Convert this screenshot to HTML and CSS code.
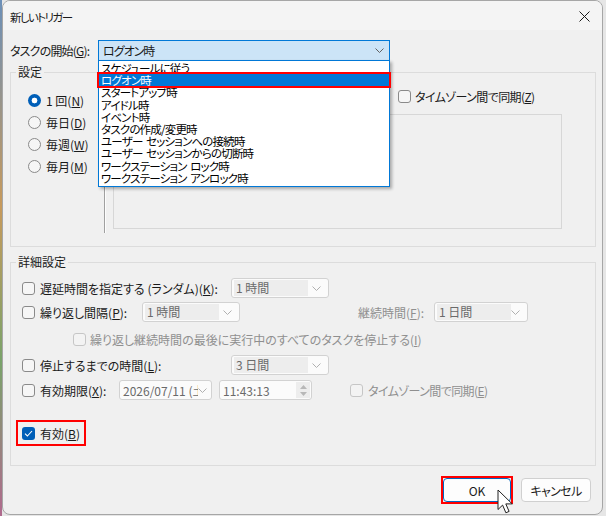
FILE: index.html
```html
<!DOCTYPE html>
<html>
<head>
  <meta charset="UTF-8">
  <title>新しいトリガー</title>
  <link rel="stylesheet" href="styles.css">
</head>
<body>
  <div class="dialog">
    <div class="titlebar">
      <span class="title">新しいトリガー</span>
      <svg class="close" width="11" height="11" viewBox="0 0 11 11"><path d="M.5.5 10.5 10.5M10.5.5 .5 10.5" stroke="#1a1a1a" stroke-width="1"/></svg>
    </div>

    <div class="content">
      <!-- タスクの開始 -->
      <div class="start-row">
        <span class="start-label">タスクの開始(<u>G</u>):</span>
        <div class="combo-main">
          <span class="tight">ログオン時</span>
          <svg width="9" height="5" viewBox="0 0 9 5"><path d="M.5.5 4.5 4.5 8.5.5" fill="none" stroke="#606060"/></svg>
          <ul class="droplist">
            <li>スケジュールに従う</li>
            <li class="selected">ログオン時</li>
            <li>スタートアップ時</li>
            <li>アイドル時</li>
            <li>イベント時</li>
            <li>タスクの作成/変更時</li>
            <li>ユーザー&nbsp; セッションへの接続時</li>
            <li>ユーザー&nbsp; セッションからの切断時</li>
            <li>ワークステーション&nbsp; ロック時</li>
            <li>ワークステーション&nbsp; アンロック時</li>
          </ul>
        </div>
      </div>

      <!-- 設定 -->
      <fieldset class="group group-settings">
        <legend>設定</legend>
        <div class="settings-inner">
          <div class="radios">
            <div class="radio-row"><span class="radio checked"></span><span>1 回(<u>N</u>)</span></div>
            <div class="radio-row"><span class="radio"></span><span>毎日(<u>D</u>)</span></div>
            <div class="radio-row"><span class="radio"></span><span>毎週(<u>W</u>)</span></div>
            <div class="radio-row"><span class="radio"></span><span>毎月(<u>M</u>)</span></div>
          </div>
          <div class="sep"></div>
          <div class="settings-right">
            <div class="tz-row"><span class="check"></span><span class="tight">タイムゾーン間で同期(<u>Z</u>)</span></div>
            <div class="inner-box"></div>
          </div>
        </div>
      </fieldset>

      <!-- 詳細設定 -->
      <fieldset class="group group-advanced">
        <legend>詳細設定</legend>
        <div class="adv-inner">
          <div class="adv-row">
            <div class="adv-label wide"><span class="check"></span><span>遅延時間を指定する (ランダム)(<u>K</u>):</span></div>
            <div class="combo"><span class="combo-text">1 時間</span><svg width="9" height="5" viewBox="0 0 9 5"><path d="M.5.5 4.5 4.5 8.5.5" fill="none" stroke="#b0b0b0"/></svg></div>
          </div>
          <div class="adv-row">
            <div class="adv-label repeat"><span class="check"></span><span>繰り返し間隔(<u>P</u>):</span></div>
            <div class="combo"><span class="combo-text">1 時間</span><svg width="9" height="5" viewBox="0 0 9 5"><path d="M.5.5 4.5 4.5 8.5.5" fill="none" stroke="#b0b0b0"/></svg></div>
            <span class="disabled duration-label">継続時間(<u>F</u>):</span>
            <div class="combo combo-duration"><span class="combo-text">1 日間</span><svg width="9" height="5" viewBox="0 0 9 5"><path d="M.5.5 4.5 4.5 8.5.5" fill="none" stroke="#b0b0b0"/></svg></div>
          </div>
          <div class="adv-row row-stop-all">
            <span class="check off"></span><span class="disabled">繰り返し継続時間の最後に実行中のすべてのタスクを停止する(<u>I</u>)</span>
          </div>
          <div class="adv-row row-stop">
            <div class="adv-label wide"><span class="check"></span><span>停止するまでの時間(<u>L</u>):</span></div>
            <div class="combo"><span class="combo-text">3 日間</span><svg width="9" height="5" viewBox="0 0 9 5"><path d="M.5.5 4.5 4.5 8.5.5" fill="none" stroke="#b0b0b0"/></svg></div>
          </div>
          <div class="adv-row row-expire">
            <div class="adv-label expire"><span class="check"></span><span>有効期限(<u>X</u>):</span></div>
            <div class="combo combo-date"><span class="plain-text">2026/07/11 (土</span><svg width="9" height="5" viewBox="0 0 9 5"><path d="M.5.5 4.5 4.5 8.5.5" fill="none" stroke="#b0b0b0"/></svg></div>
            <div class="combo combo-time">
              <span class="plain-text">11:43:13</span>
              <span class="spin">
                <svg width="7" height="4" viewBox="0 0 7 4"><path d="M3.5 0 7 4H0z" fill="#b8b8b8"/></svg>
                <svg width="7" height="4" viewBox="0 0 7 4"><path d="M0 0h7L3.5 4z" fill="#b8b8b8"/></svg>
              </span>
            </div>
            <span class="check off tz2"></span><span class="disabled tight">タイムゾーン間で同期(<u>E</u>)</span>
          </div>
          <div class="adv-row row-enabled">
            <div class="enabled-mark"><span class="check on"><svg width="9" height="7" viewBox="0 0 9 7"><path d="M1 3.6 3.4 6 8 1" fill="none" stroke="#fff" stroke-width="1.1"/></svg></span><span>有効(<u>B</u>)</span></div>
          </div>
        </div>
      </fieldset>

      <div class="buttons">
        <div class="btn-mark"><button class="btn btn-default">OK</button></div>
        <button class="btn tight">キャンセル</button>
      </div>
    </div>

    <svg class="cursor" width="17" height="26" viewBox="0 0 17 26"><path d="M1 1v19.5l4.6-4.4 3.3 7.7 3.2-1.4-3.3-7.5h6.4z" fill="#fff" stroke="#222" stroke-width="1" stroke-linejoin="round"/></svg>
  </div>
</body>
</html>
```

FILE: styles.css
```css
* {
  box-sizing: border-box;
}

html, body {
  margin: 0;
  padding: 0;
}

body {
  width: 606px;
  height: 516px;
  overflow: hidden;
  background:
    linear-gradient(90deg, transparent 0 2px, #e6e6e6 2px),
    linear-gradient(180deg, #6b8fb8 0%, #c79a5c 40%, #7aa36b 70%, #b06a8e 100%);
  font-family: "Noto Sans CJK JP", "Noto Sans", sans-serif;
  font-feature-settings: "palt";
  font-size: 12px;
  color: #1a1a1a;
}

.dialog {
  position: relative;
  margin-left: 2px;
  width: 601px;
  height: 515px;
  background: #f0f0f0;
  border: 1px solid #a6a6a6;
  border-radius: 8px;
  overflow: hidden;
}

.tight {
  letter-spacing: -0.6px;
}

/* タイトルバー */
.titlebar {
  height: 29px;
  background: #f4f4f4;
  display: flex;
  align-items: center;
  justify-content: space-between;
  padding: 0 12px 0 7px;
}

.title {
  padding-top: 2px;
  font-size: 11.5px;
  letter-spacing: -1.6px;
}

.close {
  margin-top: 1px;
}

.content {
  padding: 10px 6px 0 7px;
}

u {
  text-decoration: underline;
  text-underline-offset: 1px;
}

/* タスクの開始 */
.start-row {
  display: flex;
  align-items: center;
  height: 21px;
}

.start-label {
  width: 88px;
  flex: none;
  letter-spacing: -0.8px;
}

.combo-main {
  position: relative;
  width: 292px;
  height: 21px;
  background: #cce4f7;
  border: 1px solid #0078d7;
  display: flex;
  align-items: center;
  justify-content: space-between;
  padding: 0 5px 0 4px;
}

.combo-main .tight {
  letter-spacing: -1px;
}

.droplist {
  position: absolute;
  left: -1px;
  top: 19px;
  width: 292px;
  margin: 0;
  padding: 1px 0 2px;
  list-style: none;
  background: #fff;
  border: 1px solid #0078d7;
  box-shadow: 2px 2px 3px rgba(0, 0, 0, 0.3);
  z-index: 5;
}

.droplist li {
  height: 12.2px;
  line-height: 12px;
  padding-left: 2px;
  font-size: 11.5px;
  letter-spacing: -0.8px;
  color: #000;
  white-space: nowrap;
}

.droplist li.selected {
  background: #0078d7;
  color: #fff;
  outline: 2px solid #ff0000;
}

/* グループボックス */
.group {
  margin: 0;
  padding: 0;
  border: 1px solid #dcdcdc;
  min-width: 0;
}

.group legend {
  margin-left: 5px;
  padding: 0 2px;
  line-height: 16px;
}

.group-settings {
  margin-top: 3px;
}

.settings-inner {
  display: flex;
  height: 144px;
  margin-top: 9px;
  margin-bottom: 13px;
}

.radios {
  width: 93px;
  padding-left: 17px;
}

.radio-row {
  display: flex;
  align-items: center;
  height: 22px;
  gap: 5px;
}

.radio {
  width: 13px;
  height: 13px;
  border-radius: 50%;
  border: 1px solid #8a8a8a;
  background: #f6f6f6;
  flex: none;
}

.radio.checked {
  border: none;
  background: radial-gradient(circle, #fff 0 2.6px, #005fb8 3.2px);
}

.sep {
  width: 2px;
  border-left: 1px solid #a0a0a0;
  border-right: 1px solid #fdfdfd;
  flex: none;
}

.settings-right {
  padding-left: 7px;
}

.tz-row {
  display: flex;
  align-items: center;
  height: 14px;
  gap: 4px;
  margin-left: 285px;
}

.inner-box {
  width: 449px;
  height: 115px;
  margin-top: 11px;
  border: 1px solid #d7d7d7;
}

/* チェックボックス */
.check {
  width: 13px;
  height: 13px;
  border: 1px solid #8a8a8a;
  border-radius: 3px;
  background: #f6f6f6;
  flex: none;
  display: inline-flex;
  align-items: center;
  justify-content: center;
}

.check.off {
  border-color: #c6c6c6;
  background: #f3f3f3;
}

.check.on {
  border: none;
  background: #005fb8;
}

/* 詳細設定 */
.group-advanced {
  margin-top: 7px;
}

.adv-inner {
  padding: 6px 0 20px 11px;
}

.adv-row {
  display: flex;
  align-items: center;
  height: 24px;
}

.adv-label {
  display: flex;
  align-items: center;
  gap: 5px;
  flex: none;
  white-space: nowrap;
}

.adv-label.wide {
  width: 209px;
}

.adv-label.repeat {
  width: 120px;
}

.adv-label.expire {
  width: 97px;
}

.combo {
  width: 98px;
  height: 20px;
  border: 1px solid #d2d2d2;
  border-radius: 3px;
  background: #fbfbfb;
  display: flex;
  align-items: center;
  justify-content: space-between;
  padding: 0 7px 0 2px;
  flex: none;
}

.combo-text {
  background: #ededed;
  width: 74px;
  height: 16px;
  line-height: 16px;
  padding-left: 2px;
  color: #6a6a6a;
}

.plain-text {
  color: #6a6a6a;
  padding-left: 1px;
  white-space: nowrap;
  overflow: hidden;
}

.disabled {
  color: #8f8f8f;
}

.duration-label {
  margin-left: 118px;
  width: 76px;
  white-space: nowrap;
}

.combo-duration {
  width: 94px;
}

.row-stop-all {
  margin-top: 3px;
  padding-left: 51px;
  gap: 4px;
}

.row-stop {
  margin-top: 2px;
}

.row-expire {
  margin-top: 1px;
}

.combo-date {
  width: 93px;
  padding-right: 4px;
}

.combo-date .plain-text {
  width: 76px;
}

.combo-time {
  width: 93px;
  margin-left: 7px;
  padding-right: 1px;
}

.spin {
  display: flex;
  flex-direction: column;
  align-items: center;
  justify-content: center;
  gap: 3px;
  width: 14px;
  height: 16px;
  background: #ededed;
}

.tz2 {
  margin-left: 38px;
  margin-right: 5px;
}

.row-enabled {
  margin-top: 19px;
}

.enabled-mark {
  display: flex;
  align-items: center;
  gap: 5px;
  height: 26px;
  margin-left: -6px;
  padding: 0 4px;
  border: 2px solid #ff0000;
  width: 70px;
}

/* ボタン */
.buttons {
  display: flex;
  justify-content: flex-end;
  align-items: center;
  gap: 8px;
  margin-top: 10px;
  padding-right: 5px;
}

.btn-mark {
  border: 2px solid #ff0000;
}

.btn {
  width: 70px;
  height: 24px;
  background: #fdfdfd;
  border: 1px solid #d0d0d0;
  border-radius: 4px;
  font-family: inherit;
  font-feature-settings: "palt";
  font-size: 12px;
  color: #1a1a1a;
  padding: 0;
}

.btn-default {
  width: 68px;
  border-color: #0067c0;
}

.cursor {
  position: absolute;
  left: 494px;
  top: 488px;
}
```
